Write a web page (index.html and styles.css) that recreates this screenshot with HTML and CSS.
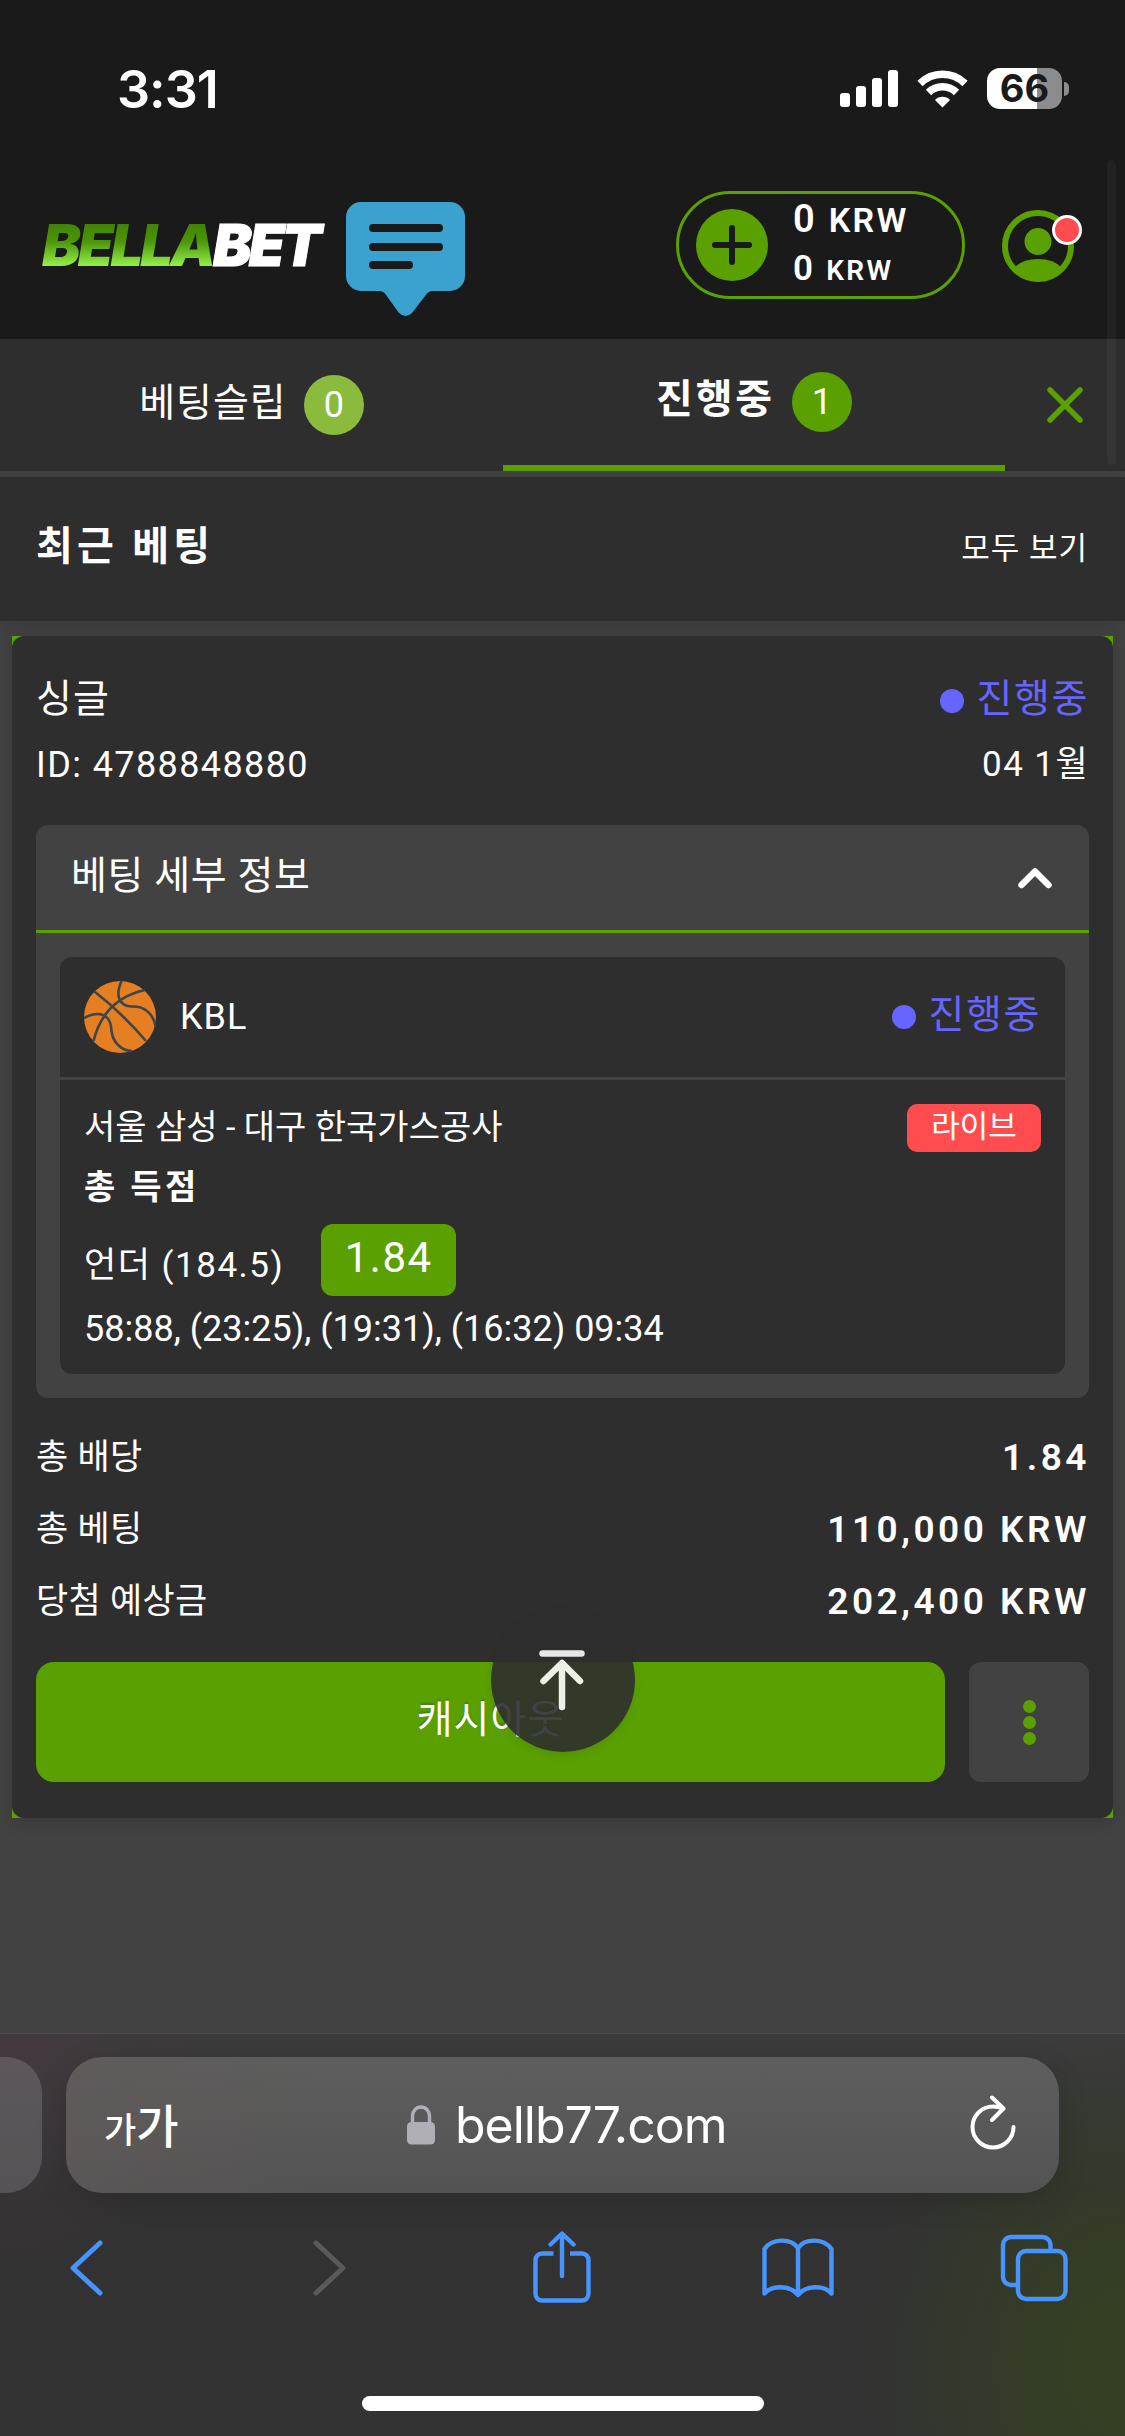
FILE: index.html
```html
<!doctype html>
<html lang="ko">
<head>
    <meta charset="utf-8">
    <title>BELLABET</title>
    <meta name="viewport" content="width=device-width, initial-scale=1.0">
    <link rel="stylesheet" href="styles.css">
</head>
<body>

    <div class="status-bar">
        <span class="time">3:31</span>
        <div class="status-icons">
            <svg class="signal" width="58" height="38" viewBox="0 0 58 38" fill="#fff">
                <rect x="0" y="23" width="10" height="14" rx="3"/>
                <rect x="16" y="16" width="10" height="21" rx="3"/>
                <rect x="32" y="8" width="10" height="29" rx="3"/>
                <rect x="48" y="0" width="10" height="37" rx="3"/>
            </svg>
            <svg class="wifi" width="51" height="38" viewBox="0 0 51 38" fill="none" stroke="#fff" stroke-width="7.500">
                <path d="M3 13.500a32 32 0 0 1 45 0"/>
                <path d="M11.500 22.500a20 20 0 0 1 28 0"/>
                <path d="M25.500 37.500l-7.500-7.500a10.500 10.500 0 0 1 15 0z" fill="#fff" stroke="none"/>
            </svg>
            <div class="battery"><span>66</span></div>
            <div class="battery-tip"></div>
        </div>
    </div>

    <header class="header">
        <div class="logo"><span class="logo-bella">BELLA</span><span class="logo-bet">BET</span></div>
        <svg class="bubble" width="119" height="114" viewBox="0 0 119 114">
            <path d="M15 0H104a15 15 0 0 1 15 15V74a15 15 0 0 1-15 15H86q-3 0-5 2.500L66 111q-6.500 6-13 0L39 91.500q-2-2.500-5-2.500H15A15 15 0 0 1 0 74V15A15 15 0 0 1 15 0z" fill="#3ba1ce"/>
            <g stroke="#1a1a1a" stroke-width="8" stroke-linecap="round">
                <path d="M27 26H93M27 45H93M27 63H63"/>
            </g>
        </svg>
        <div class="balance">
            <svg width="72" height="72" viewBox="0 0 72 72">
                <circle cx="36" cy="36" r="36" fill="#5aa000"/>
                <path d="M36 19V53M19 36H53" stroke="#1a1a1a" stroke-width="6" stroke-linecap="round"/>
            </svg>
            <div class="amounts">
                <div class="amount">0 <small>KRW</small></div>
                <div class="amount bonus">0 <small>KRW</small></div>
            </div>
        </div>
        <div class="profile">
            <svg width="72" height="72" viewBox="0 0 72 72">
                <circle cx="36" cy="36" r="33" fill="none" stroke="#5aa000" stroke-width="6"/>
                <circle cx="36" cy="31.500" r="13.500" fill="#5aa000"/>
                <path d="M12 58Q20 49 36 49T60 58Q50 70 36 70T12 58z" fill="#5aa000"/>
            </svg>
            <span class="dot"></span>
        </div>
    </header>

    <nav class="tabs">
        <div class="tab">
            <span class="tab-name">베팅슬립</span>
            <span class="count">0</span>
        </div>
        <div class="tab active">
            <span class="tab-name">진행중</span>
            <span class="count">1</span>
        </div>
        <svg class="close" width="36" height="36" viewBox="0 0 36 36" stroke="#5aa000" stroke-width="5.500" stroke-linecap="round">
            <path d="M3 3L33 33M33 3L3 33"/>
        </svg>
    </nav>

    <div class="recent">
        <h2>최근 베팅</h2>
        <span class="all">모두 보기</span>
    </div>

    <main class="bets">
        <div class="bet-wrap">
        <div class="bet">
            <div class="line type">
                <span>싱글</span>
                <span class="state">진행중</span>
            </div>
            <div class="line meta">
                <span class="bet-id">ID: 4788848880</span>
                <span class="bet-date">04 1월</span>
            </div>

            <div class="details">
                <div class="details-head">
                    <span>베팅 세부 정보</span>
                    <svg width="34" height="22" viewBox="0 0 34 22" fill="none" stroke="#fff" stroke-width="6.500" stroke-linecap="round" stroke-linejoin="round">
                        <path d="M3.500 18L17 4.500L30.500 18"/>
                    </svg>
                </div>
                <div class="match">
                    <div class="match-head">
                        <svg width="72" height="72" viewBox="0 0 72 72">
                            <circle cx="36" cy="36" r="36" fill="#e67e22"/>
                            <g fill="none" stroke="#3b474c" stroke-width="2.600">
                                <path d="M10.500 10.500Q38 32 62 60"/>
                                <path d="M61 9Q20 18 9.500 60"/>
                                <path d="M37.500 0C31 15 35 25 48 25.500C60 25 69 32 71.500 45"/>
                                <path d="M0 37Q7 33 13 33C24 33 27 40 27.500 50C29 62 38 70 48 70"/>
                            </g>
                        </svg>
                        <span class="league">KBL</span>
                        <span class="state">진행중</span>
                    </div>
                    <div class="match-body">
                        <div class="teams">
                            <span>서울 삼성 - 대구 한국가스공사</span>
                            <span class="live">라이브</span>
                        </div>
                        <div class="market">총 득점</div>
                        <div class="pick">
                            <span>언더 (184.5)</span>
                            <span class="odd">1.84</span>
                        </div>
                        <div class="score">58:88, (23:25), (19:31), (16:32) 09:34</div>
                    </div>
                </div>
            </div>

            <div class="total"><span>총 배당</span><b>1.84</b></div>
            <div class="total"><span>총 베팅</span><b>110,000 KRW</b></div>
            <div class="total"><span>당첨 예상금</span><b>202,400 KRW</b></div>

            <div class="actions">
                <button class="cashout">캐시아웃</button>
                <button class="more"><i></i><i></i><i></i></button>
            </div>
        </div>
        </div>
    </main>

    <div class="to-top">
        <svg width="46" height="62" viewBox="0 0 46 62" fill="none" stroke="#ebf1e4" stroke-width="6.500" stroke-linecap="round" stroke-linejoin="round">
            <path d="M3.500 3.500H42.500" stroke="#e6e6e6"/>
            <path d="M23 57V14M4.500 31L23 13L41 31"/>
        </svg>
    </div>
    <div class="scrollbar"></div>

    <footer class="browser">
        <div class="address-row">
            <div class="prev-page"></div>
            <div class="address">
                <span class="text-size"><small>가</small>가</span>
                <div class="url">
                    <svg width="28" height="40" viewBox="0 0 28 40">
                        <path d="M5.500 20V11a8.500 9 0 0 1 17 0V20" fill="none" stroke="#b0afb6" stroke-width="3.500"/>
                        <rect x="0" y="17" width="28" height="22.500" rx="4.500" fill="#b0afb6"/>
                    </svg>
                    <span>bellb77.com</span>
                </div>
                <svg class="reload" width="46" height="56" viewBox="0 0 46 56" fill="none" stroke="#fff" stroke-width="4" stroke-linecap="round" stroke-linejoin="round">
                    <path d="M43.500 32A20.500 20.500 0 1 1 23 11.500Q28 11.500 33 13.500"/>
                    <path d="M22 2.500L33.500 13.500L22 25"/>
                </svg>
            </div>
        </div>
        <div class="toolbar">
            <svg class="back" width="34" height="56" viewBox="0 0 34 56" fill="none" stroke="#4794ff" stroke-width="5" stroke-linecap="round" stroke-linejoin="round">
                <path d="M31 3L4 28L31 53"/>
            </svg>
            <svg class="forward" width="34" height="56" viewBox="0 0 34 56" fill="none" stroke="#5a5a5a" stroke-width="5" stroke-linecap="round" stroke-linejoin="round">
                <path d="M3 3L30 28L3 53"/>
            </svg>
            <svg class="share" width="58" height="74" viewBox="0 0 58 74" fill="none" stroke="#4794ff" stroke-width="4.400" stroke-linecap="round" stroke-linejoin="round">
                <path d="M20.500 22.500H9A6.500 6.500 0 0 0 2.500 29V63a6.500 6.500 0 0 0 6.500 6.500H49A6.500 6.500 0 0 0 55.500 63V29A6.500 6.500 0 0 0 49 22.500H37" stroke-linecap="butt"/>
                <path d="M29 45V3M17.500 13.500L29 2.500L40.500 13.500"/>
            </svg>
            <svg class="bookmarks" width="72" height="60" viewBox="0 0 72 60" fill="none" stroke="#4794ff" stroke-width="4.400" stroke-linecap="round" stroke-linejoin="round">
                <path d="M36 10C29 0 10 0 2.500 11V55.500C10 47 28 47 36 57C44 47 62 47 69.500 55.500V11C62 0 43 0 36 10zM36 10V56"/>
            </svg>
            <svg class="pages" width="68" height="68" viewBox="0 0 68 68" fill="none" stroke="#4794ff" stroke-width="4.400">
                <path d="M16 51H11a8 8 0 0 1-8-8V11A8 8 0 0 1 11 3H42.500A8 8 0 0 1 50.500 11V15"/>
                <rect x="18" y="17" width="47.500" height="48" rx="8"/>
            </svg>
        </div>
        <div class="home"></div>
    </footer>

</body>
</html>
```

FILE: styles.css
```css
* {
    box-sizing: border-box;
}
body {
    margin: 0;
    width: 1125px;
    height: 2436px;
    display: flex;
    flex-direction: column;
    position: relative;
    overflow: hidden;
    background-color: #424242;
    color: #fff;
    font-family: Roboto, "Noto Sans CJK KR", sans-serif;
    white-space: nowrap;
}
svg {
    display: block;
    flex: none;
}

/* status bar */
.status-bar {
    display: flex;
    justify-content: space-between;
    height: 160px;
    padding: 68px 56px 0 117px;
    background-color: #1a1a1a;
    font-family: Inter, sans-serif;
}
.time {
    font-size: 52px;
    font-weight: 600;
    line-height: 43px;
    letter-spacing: -1px;
}
.status-icons {
    display: flex;
    align-items: center;
    height: 41px;
}
.wifi {
    margin: 0 19px;
}
.battery {
    width: 75px;
    height: 41px;
    border-radius: 13px;
    background: linear-gradient(to right, #fff 50px, #8c8c8c 50px);
    color: #1a1a1a;
    font-size: 38px;
    font-weight: 700;
    line-height: 41px;
    text-align: center;
}
.battery-tip {
    width: 5px;
    height: 14px;
    margin-left: 2px;
    border-radius: 0 5px 5px 0;
    background-color: #8c8c8c;
}

/* header */
.header {
    display: flex;
    height: 179px;
    padding-left: 42px;
    background-color: #1a1a1a;
}
.logo {
    width: 304px;
    padding-top: 60px;
    font-family: Inter, sans-serif;
    font-size: 58px;
    font-weight: 900;
    font-style: italic;
    line-height: 50px;
    letter-spacing: -3.1px;
}
.logo-bella {
    background: linear-gradient(#418306 20%, #4b9609 45%, #91ea46 78%);
    -webkit-background-clip: text;
    background-clip: text;
    color: transparent;
}
.logo-bet {
    -webkit-text-stroke: 1px #fff;
}
.bubble {
    margin-top: 42px;
}
.balance {
    display: flex;
    align-items: center;
    width: 289px;
    height: 108px;
    margin: 31px 0 0 211px;
    padding-left: 17px;
    border: 3px solid #5aa000;
    border-radius: 54px;
}
.amounts {
    margin: 0 0 3px 25px;
}
.amount {
    height: 49px;
    font-size: 38px;
    font-weight: 600;
    line-height: 49px;
    letter-spacing: 2.3px;
}
.amount small {
    font-size: 34px;
}
.bonus {
    font-size: 35px;
}
.bonus small {
    font-size: 28px;
}
.profile {
    position: relative;
    width: 72px;
    margin: 50px 0 0 37px;
}
.dot {
    position: absolute;
    top: 5px;
    right: -8px;
    width: 30px;
    height: 30px;
    border: 3px solid #fff;
    border-radius: 50%;
    background-color: #ff4d4f;
}

/* tabs */
.tabs {
    display: flex;
    height: 138px;
    border-bottom: 6px solid #424242;
    background-color: #2e2e2e;
}
.tab {
    display: flex;
    justify-content: center;
    align-items: center;
    width: 503px;
    font-size: 39px;
}
.tab.active {
    width: 502px;
    border-bottom: 6px solid #5aa000;
    font-size: 40px;
    font-weight: 700;
}
.tab-name {
    padding-bottom: 12px;
    letter-spacing: 1px;
}
.active .tab-name {
    letter-spacing: 2.8px;
}
.count {
    width: 60px;
    height: 60px;
    margin-left: 17px;
    border-radius: 50%;
    background-color: #8bbb3d;
    font-size: 36px;
    font-weight: 400;
    line-height: 60px;
    text-align: center;
}
.active .count {
    background-color: #5aa000;
}
.close {
    margin: 48px 0 0 42px;
}

.recent {
    display: flex;
    justify-content: space-between;
    height: 144px;
    padding: 0 37px 0 36px;
    background-color: #2e2e2e;
    line-height: 140px;
    box-shadow: 0 4px 16px rgba(0, 0, 0, 0.12);
}
.recent h2 {
    margin: 0;
    font-size: 40px;
    font-weight: 700;
    letter-spacing: 4.2px;
}
.all {
    font-size: 31px;
    line-height: 143px;
    letter-spacing: 1px;
}

/* bet card */
.bets {
    padding: 15px 12px 0;
}
.bet-wrap {
    background-color: #5aa000;
    box-shadow: 0 4px 16px rgba(0, 0, 0, 0.15);
}
.bet {
    height: 1182px;
    padding: 30px 24px 0;
    border-radius: 12px;
    background-color: #2e2e2e;
}
.line {
    display: flex;
    justify-content: space-between;
    height: 66px;
    line-height: 66px;
    font-size: 39px;
    letter-spacing: 1px;
}
.meta {
    font-size: 36px;
    letter-spacing: 1.4px;
}
.bet-date {
    font-size: 35px;
}
.state {
    display: flex;
    align-items: center;
    color: #6765ff;
    font-size: 39px;
    letter-spacing: 1.6px;
}
.state::before {
    content: "";
    width: 24px;
    height: 24px;
    margin: 4px 13px 0 0;
    border-radius: 50%;
    background-color: #6765ff;
}
.details {
    height: 573px;
    margin-top: 27px;
    border-radius: 12px;
    background-color: #424242;
}
.details-head {
    display: flex;
    justify-content: space-between;
    align-items: center;
    height: 108px;
    padding: 0 37px 0 35px;
    border-bottom: 3px solid #5aa000;
    font-size: 39px;
    letter-spacing: 0.6px;
}
.details-head span {
    padding-bottom: 12px;
}
.match {
    height: 417px;
    margin: 24px;
    border-radius: 12px;
    background-color: #2e2e2e;
}
.match-head {
    display: flex;
    align-items: center;
    height: 123px;
    padding: 0 24px;
    border-bottom: 3px solid #424242;
}
.match-head .state {
    margin: 0 0 12px auto;
}
.match-head .state::before {
    margin-top: 11px;
}
.league {
    margin-left: 24px;
    font-size: 36px;
    letter-spacing: 1px;
}
.match-body {
    padding: 24px;
    font-size: 34px;
}
.teams {
    display: flex;
    justify-content: space-between;
    line-height: 46px;
}
.live {
    width: 134px;
    height: 48px;
    border-radius: 10px;
    background-color: #ff4d4f;
    font-size: 31px;
    line-height: 46px;
    text-align: center;
}
.market {
    height: 72px;
    font-weight: 700;
    line-height: 71px;
    letter-spacing: 3.3px;
}
.pick {
    display: flex;
    height: 72px;
    font-size: 35px;
    line-height: 83px;
    letter-spacing: 1.5px;
}
.odd {
    width: 135px;
    margin-left: 37px;
    border-radius: 12px;
    background-color: #5aa000;
    font-size: 42px;
    line-height: 68px;
    text-align: center;
}
.score {
    font-size: 36px;
    line-height: 66px;
}

.total {
    display: flex;
    justify-content: space-between;
    height: 72px;
    line-height: 72px;
    font-size: 35px;
    letter-spacing: 0.3px;
}
.details + .total {
    margin-top: 24px;
}
.total b {
    font-size: 37px;
    font-weight: 600;
    letter-spacing: 3.5px;
    margin-right: -1px;
}

.actions {
    display: flex;
    gap: 24px;
    margin-top: 24px;
}
button {
    height: 120px;
    padding: 0;
    border: none;
    color: #fff;
    font: inherit;
}
.cashout {
    width: 909px;
    padding-bottom: 13px;
    border-radius: 18px;
    background-color: #5aa000;
    font-size: 39px;
    letter-spacing: 1px;
    text-shadow: 0 -2px 2px rgba(0, 0, 0, 0.2);
}
.more {
    display: flex;
    flex-direction: column;
    align-items: center;
    justify-content: center;
    gap: 3px;
    width: 120px;
    border-radius: 12px;
    background-color: #424242;
}
.more i {
    width: 13px;
    height: 13px;
    border-radius: 50%;
    background-color: #5aa000;
}

/* floats over the card */
.to-top {
    position: absolute;
    top: 1608px;
    left: 491px;
    width: 144px;
    height: 144px;
    padding: 42px 0 0 48px;
    border-radius: 50%;
    background-color: rgba(46, 45, 46, 0.9);
    box-shadow: 0 4px 8px rgba(0, 0, 0, 0.08);
}
.scrollbar {
    position: absolute;
    top: 160px;
    right: 9px;
    width: 9px;
    height: 305px;
    border-radius: 5px;
    background-color: rgba(255, 255, 255, 0.035);
}

/* browser bar */
.browser {
    height: 403px;
    margin-top: auto;
    border-top: 1px solid #4a4a4a;
    background:
        radial-gradient(ellipse 260px 330px at 1125px 330px, #343f24 20%, rgba(52, 63, 36, 0) 100%),
        radial-gradient(ellipse 220px 260px at 0 0, rgba(70, 56, 64, 0.7), rgba(70, 56, 64, 0)),
        linear-gradient(#3c3c3c, #323232 40%, #333);
    font-family: Inter, "Noto Sans CJK KR", sans-serif;
}
.address-row {
    display: flex;
    gap: 24px;
    padding-top: 23px;
}
.prev-page {
    width: 42px;
    height: 136px;
    border-radius: 0 36px 36px 0;
    background: linear-gradient(#5d575b, #555355);
}
.address {
    display: flex;
    align-items: center;
    justify-content: space-between;
    width: 993px;
    height: 136px;
    padding: 0 43px 0 38px;
    border-radius: 36px;
    background: linear-gradient(to right, rgba(100, 88, 90, 0.5), rgba(100, 88, 90, 0) 25%), linear-gradient(#5d5e5d, #535353);
    box-shadow: 0 8px 30px rgba(0, 0, 0, 0.15);
}
.text-size {
    padding-bottom: 5px;
    font-size: 46px;
    font-weight: 500;
}
.text-size small {
    font-size: 35px;
}
.url {
    display: flex;
    align-items: center;
    gap: 20px;
    margin-right: 15px;
    font-size: 50px;
    letter-spacing: -1px;
}
.reload {
    margin-bottom: 4px;
}
.toolbar {
    display: flex;
    align-items: center;
    height: 76px;
    margin-top: 37px;
    padding-left: 69px;
}
.forward {
    margin-left: 210px;
}
.share {
    margin: 0 171px 0 186px;
}
.pages {
    margin-left: 166px;
}
.home {
    width: 402px;
    height: 15px;
    margin: 90px auto 0;
    border-radius: 8px;
    background-color: #fff;
}
```
